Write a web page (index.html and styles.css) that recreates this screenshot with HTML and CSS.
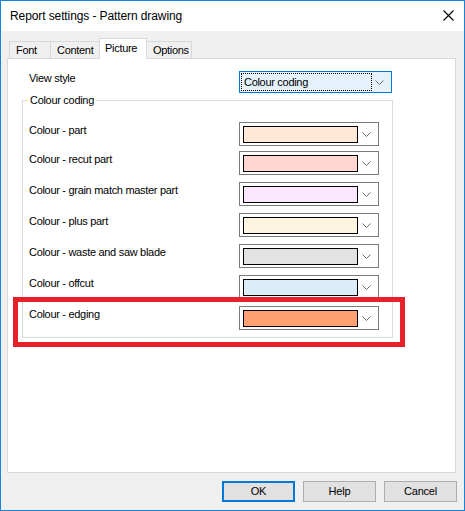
FILE: index.html
```html
<!DOCTYPE html>
<html>
<head>
<meta charset="utf-8">
<title>Report settings - Pattern drawing</title>
<link rel="stylesheet" href="styles.css">
</head>
<body>
<div class="window">
  <div class="titlebar">
    <span class="title">Report settings - Pattern drawing</span>
    <svg class="close" width="11" height="11" viewBox="0 0 11 11"><path d="M0.5 0.5 L10.5 10.5 M10.5 0.5 L0.5 10.5" stroke="#000" stroke-width="1.1" fill="none"/></svg>
  </div>
  <div class="client">
    <div class="tabs">
      <div class="tab tab-font">Font</div>
      <div class="tab tab-content">Content</div>
      <div class="tab tab-picture selected">Picture</div>
      <div class="tab tab-options">Options</div>
    </div>
    <div class="panel">
      <div class="view-row">
        <span class="label">View style</span>
        <div class="dropdown">
          <span class="focus">Colour coding</span>
          <svg class="chev" width="9" height="5" viewBox="0 0 9 5"><polyline points="0.5,0.5 4.5,4.5 8.5,0.5" fill="none" stroke="#6d6d6d" stroke-width="1"/></svg>
        </div>
      </div>
      <div class="group">
        <span class="group-title">Colour coding</span>
        <div class="row first">
          <span class="label">Colour - part</span>
          <div class="combo"><span class="swatch c-part"></span><svg class="chev" width="9" height="5" viewBox="0 0 9 5"><polyline points="0.5,0.5 4.5,4.5 8.5,0.5" fill="none" stroke="#6d6d6d" stroke-width="1"/></svg></div>
        </div>
        <div class="row">
          <span class="label">Colour - recut part</span>
          <div class="combo"><span class="swatch c-recut"></span><svg class="chev" width="9" height="5" viewBox="0 0 9 5"><polyline points="0.5,0.5 4.5,4.5 8.5,0.5" fill="none" stroke="#6d6d6d" stroke-width="1"/></svg></div>
        </div>
        <div class="row">
          <span class="label">Colour - grain match master part</span>
          <div class="combo"><span class="swatch c-grain"></span><svg class="chev" width="9" height="5" viewBox="0 0 9 5"><polyline points="0.5,0.5 4.5,4.5 8.5,0.5" fill="none" stroke="#6d6d6d" stroke-width="1"/></svg></div>
        </div>
        <div class="row">
          <span class="label">Colour - plus part</span>
          <div class="combo"><span class="swatch c-plus"></span><svg class="chev" width="9" height="5" viewBox="0 0 9 5"><polyline points="0.5,0.5 4.5,4.5 8.5,0.5" fill="none" stroke="#6d6d6d" stroke-width="1"/></svg></div>
        </div>
        <div class="row">
          <span class="label">Colour - waste and saw blade</span>
          <div class="combo"><span class="swatch c-waste"></span><svg class="chev" width="9" height="5" viewBox="0 0 9 5"><polyline points="0.5,0.5 4.5,4.5 8.5,0.5" fill="none" stroke="#6d6d6d" stroke-width="1"/></svg></div>
        </div>
        <div class="row">
          <span class="label">Colour - offcut</span>
          <div class="combo"><span class="swatch c-offcut"></span><svg class="chev" width="9" height="5" viewBox="0 0 9 5"><polyline points="0.5,0.5 4.5,4.5 8.5,0.5" fill="none" stroke="#6d6d6d" stroke-width="1"/></svg></div>
        </div>
        <div class="row">
          <span class="label">Colour - edging</span>
          <div class="combo"><span class="swatch c-edging"></span><svg class="chev" width="9" height="5" viewBox="0 0 9 5"><polyline points="0.5,0.5 4.5,4.5 8.5,0.5" fill="none" stroke="#6d6d6d" stroke-width="1"/></svg></div>
        </div>
      </div>
    </div>
    <div class="buttons">
      <div class="btn default">OK</div>
      <div class="btn">Help</div>
      <div class="btn">Cancel</div>
    </div>
  </div>
  <div class="highlight"></div>
</div>
</body>
</html>
```
FILE: styles.css
```css
* { box-sizing: border-box; }
html, body { margin: 0; padding: 0; background: #fff; }
body {
  font-family: "Liberation Sans", Arial, sans-serif;
  font-size: 11px;
  color: #000;
}
.window {
  position: relative;
  width: 465px;
  height: 511px;
  border: 1px solid #1883d7;
  background: #f0f0f0;
  display: flex;
  flex-direction: column;
}
.titlebar {
  height: 30px;
  background: #fff;
  display: flex;
  align-items: center;
  justify-content: space-between;
  padding: 0 10px 1px 9px;
}
.title {
  font-size: 12px;
  letter-spacing: -0.1px;
}
.close { display: block; margin-top: 0; }
.client {
  flex: 1;
  padding-top: 7px;
}
.tabs {
  display: flex;
  align-items: flex-end;
  margin-left: 8px;
  height: 20px;
}
.tab {
  height: 17px;
  border: 1px solid #d9d9d9;
  border-bottom: none;
  background: #f0f0f0;
  line-height: 16px;
  padding-left: 6px;
  letter-spacing: -0.3px;
  margin-left: -1px;
}
.tab-font { width: 42px; margin-left: 0; }
.tab-content { width: 50px; }
.tab-picture { width: 48px; }
.tab-options { width: 46px; }
.tab.selected {
  position: relative;
  z-index: 2;
  height: 21px;
  margin-bottom: -1px;
  background: #fff;
  line-height: 18px;
  padding-left: 5px;
}
.panel {
  margin-left: 6px;
  width: 449px;
  height: 415px;
  background: #fff;
  border: 1px solid #d9d9d9;
  padding: 12px 0 0 21px;
}
.label {
  letter-spacing: -0.3px;
  line-height: 13px;
}
.view-row {
  display: flex;
  align-items: flex-start;
}
.view-row .label { width: 210px; padding-top: 1px; }
.dropdown {
  width: 153px;
  height: 22px;
  border: 1px solid #0078d7;
  background: #e5f1fb;
  display: flex;
  align-items: center;
  padding: 1px 7px 0 1px;
}
.focus {
  width: 131px;
  height: 18px;
  border: 1px dotted #000;
  line-height: 16px;
  padding-left: 2px;
  letter-spacing: -0.3px;
  margin-top: -1px;
}
.dropdown .chev { margin-left: auto; }
.group {
  position: relative;
  margin: 7px 0 0 -7px;
  width: 371px;
  border: 1px solid #dcdcdc;
  padding: 21px 0 0 6px;
}
.group-title {
  position: absolute;
  top: -7px;
  left: 5px;
  background: #fff;
  padding: 0 2px;
  line-height: 13px;
  letter-spacing: -0.3px;
}
.row {
  height: 31px;
  display: flex;
  align-items: flex-start;
}
.row.first { height: 29px; }
.row .label { width: 210px; padding-top: 2px; }
.combo {
  width: 140px;
  height: 24px;
  border: 1px solid #7a7a7a;
  background: #fff;
  display: flex;
  align-items: center;
  padding: 0 7px 0 3px;
}
.swatch {
  display: block;
  width: 115px;
  height: 17px;
  border: 1px solid #000;
}
.combo .chev { margin-left: auto; margin-top: 1px; }
.c-part { background: #ffe8d5; }
.c-recut { background: #ffd6d0; }
.c-grain { background: #fbe7fd; }
.c-plus { background: #fdf5e0; }
.c-waste { background: #e3e3e3; }
.c-offcut { background: #daedf8; }
.c-edging { background: #ffa072; }
.buttons {
  display: flex;
  justify-content: flex-end;
  gap: 8px;
  margin-top: 8px;
  padding-right: 7px;
}
.btn {
  width: 73px;
  height: 21px;
  border: 1px solid #adadad;
  background: #e1e1e1;
  text-align: center;
  line-height: 19px;
  font-size: 11px;
  letter-spacing: -0.2px;
}
.btn.default {
  border: 2px solid #0078d7;
  line-height: 17px;
}
.highlight {
  position: absolute;
  left: 12px;
  top: 296px;
  width: 392px;
  height: 50px;
  border: 5px solid #e8202a;
}
```
